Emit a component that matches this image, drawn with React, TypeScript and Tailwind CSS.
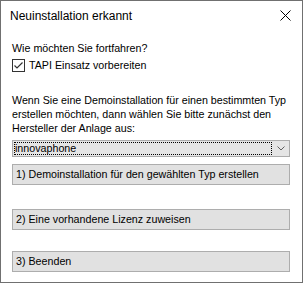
const font = { fontFamily: '"Liberation Sans", Arial, sans-serif' };

function WinButton({ label }: { label: string }) {
  return (
    <button className="w-[278px] h-[21px] bg-[#e1e1e1] border border-[#adadad] text-left pl-[3px] text-[10.7px] leading-none text-black">
      {label}
    </button>
  );
}

export default function App() {
  return (
    <div className="w-[304px] h-[284px] bg-white" style={font}>
      <div className="w-[303px] h-[283px] border border-[#707070] flex flex-col bg-white">
        {/* Title bar */}
        <div className="h-[29px] flex items-center justify-between pl-[9px] pr-[10px]">
          <span className="text-[12px] text-black">Neuinstallation erkannt</span>
          <svg width="11" height="11" viewBox="0 0 11 11" className="mr-[1px]">
            <path d="M0.5 0.5 L10.5 10.5 M10.5 0.5 L0.5 10.5" stroke="#000" strokeWidth="1" />
          </svg>
        </div>

        {/* Content */}
        <div className="flex flex-col px-[11px] text-[10.7px] text-black leading-[13px]">
          <p className="mt-[12px]">Wie möchten Sie fortfahren?</p>
          <label className="mt-[4px] flex items-center gap-[4px]">
            <span className="w-[13px] h-[13px] border border-[#333] bg-white flex items-center justify-center">
              <svg width="11" height="11" viewBox="0 0 11 11">
                <path d="M1.5 5.5 L4 8 L9.5 2.5" stroke="#333" strokeWidth="1.2" fill="none" />
              </svg>
            </span>
            <span>TAPI Einsatz vorbereiten</span>
          </label>
          <p className="mt-[21px] w-[290px] leading-[14px]">
            Wenn Sie eine Demoinstallation für einen bestimmten Typ erstellen möchten, dann wählen Sie bitte zunächst den Hersteller der Anlage aus:
          </p>

          <div className="mt-[5px] w-[278px] h-[17px] bg-[#e5e5e5] border border-[#acacac] flex items-center">
            <span className="flex-1 h-[13px] ml-[1px] border border-dotted border-black flex items-center leading-none">innovaphone</span>
            <span className="w-[17px] flex justify-center">
              <svg width="8" height="5" viewBox="0 0 8 5">
                <path d="M0.5 0.5 L4 4 L7.5 0.5" stroke="#606060" strokeWidth="1" fill="none" />
              </svg>
            </span>
          </div>

          <div className="mt-[7px]"><WinButton label="1) Demoinstallation für den gewählten Typ erstellen" /></div>
          <div className="mt-[24px]"><WinButton label="2) Eine vorhandene Lizenz zuweisen" /></div>
          <div className="mt-[21px]"><WinButton label="3) Beenden" /></div>
        </div>
      </div>
    </div>
  );
}
